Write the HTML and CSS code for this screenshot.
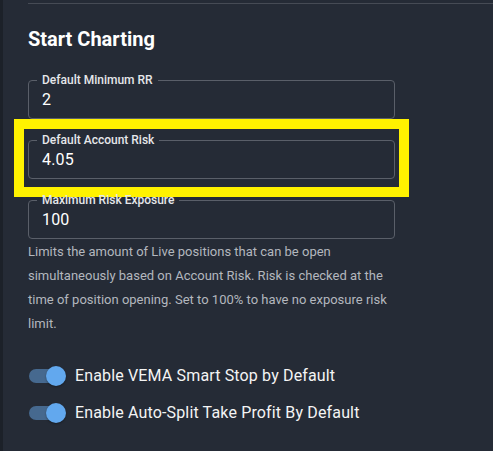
FILE: index.html
```html
<!DOCTYPE html>
<html lang="en">
<head>
<meta charset="utf-8">
<title>Start Charting</title>
<link rel="stylesheet" href="styles.css">
</head>
<body>
<div class="rail"></div>
<main class="panel">
  <div class="divider"></div>
  <h2 class="title">Start Charting</h2>
  <div class="fields">
    <div class="field">
      <fieldset class="outline">
        <legend class="label">Default Minimum RR</legend>
        <div class="value">2</div>
      </fieldset>
    </div>
    <div class="field">
      <fieldset class="outline">
        <legend class="label">Default Account Risk</legend>
        <div class="value">4.05</div>
      </fieldset>
      <div class="highlight"></div>
    </div>
    <div class="field">
      <fieldset class="outline">
        <legend class="label">Maximum Risk Exposure</legend>
        <div class="value">100</div>
      </fieldset>
    </div>
  </div>
  <p class="helper">Limits the amount of Live positions that can be open simultaneously based on Account Risk. Risk is checked at the time of position opening. Set to 100% to have no exposure risk limit.</p>
  <div class="toggles">
    <label class="toggle-row">
      <span class="switch"><span class="track"></span><span class="thumb"></span></span>
      <span class="toggle-text">Enable VEMA Smart Stop by Default</span>
    </label>
    <label class="toggle-row">
      <span class="switch"><span class="track"></span><span class="thumb"></span></span>
      <span class="toggle-text">Enable Auto-Split Take Profit By Default</span>
    </label>
  </div>
</main>
</body>
</html>
```

FILE: styles.css
```css
html, body {
  margin: 0;
  padding: 0;
  height: 100%;
}
body {
  background: #252b36;
  font-family: Roboto, "Liberation Sans", sans-serif;
  color: #ffffff;
  display: flex;
  overflow: hidden;
}
.rail {
  width: 3px;
  flex: none;
  background: #1c2129;
}
.panel {
  flex: 1;
  padding-left: 25px;
  display: flex;
  flex-direction: column;
}
.divider {
  height: 1px;
  margin-top: 3px;
  background: #464b55;
}
.title {
  margin: 23px 0 0;
  font-size: 20px;
  line-height: 24px;
  font-weight: 700;
  color: #ffffff;
}
.fields {
  margin-top: 22px;
  display: flex;
  flex-direction: column;
  gap: 14px;
  width: 367px;
}
.field {
  position: relative;
}
.outline {
  margin: 0;
  padding: 0 13px 9px;
  border: 1px solid #5a5f69;
  border-radius: 4px;
  min-width: 0;
}
.label {
  margin-left: -5px;
  padding: 0 5px;
  font-size: 12px;
  line-height: 14px;
  font-weight: 500;
  color: #e6e7ea;
}
.value {
  padding-top: 3px;
  font-size: 16px;
  line-height: 19px;
  letter-spacing: 0.15px;
  color: #ffffff;
}
.highlight {
  position: absolute;
  left: -14px;
  top: -14px;
  width: 375px;
  height: 58px;
  border: 10px solid #fff200;
  pointer-events: none;
}
.helper {
  margin: 1px 0 0;
  width: 370px;
  font-size: 13px;
  line-height: 24px;
  color: #b3b7be;
}
.toggles {
  margin-top: 21px;
  display: flex;
  flex-direction: column;
}
.toggle-row {
  height: 37px;
  display: flex;
  align-items: center;
}
.switch {
  position: relative;
  width: 38px;
  height: 20px;
  margin-right: 9px;
  display: flex;
  align-items: center;
}
.track {
  margin-left: 1px;
  width: 34px;
  height: 14px;
  border-radius: 7px;
  background: #46698f;
}
.thumb {
  position: absolute;
  right: 0;
  top: 0;
  width: 20px;
  height: 20px;
  border-radius: 50%;
  background: #62a8ee;
  box-shadow: 0 1px 2px rgba(0,0,0,0.35);
}
.toggle-text {
  font-size: 16px;
  line-height: 19px;
  letter-spacing: 0.15px;
  color: #f4f4f4;
}
```
